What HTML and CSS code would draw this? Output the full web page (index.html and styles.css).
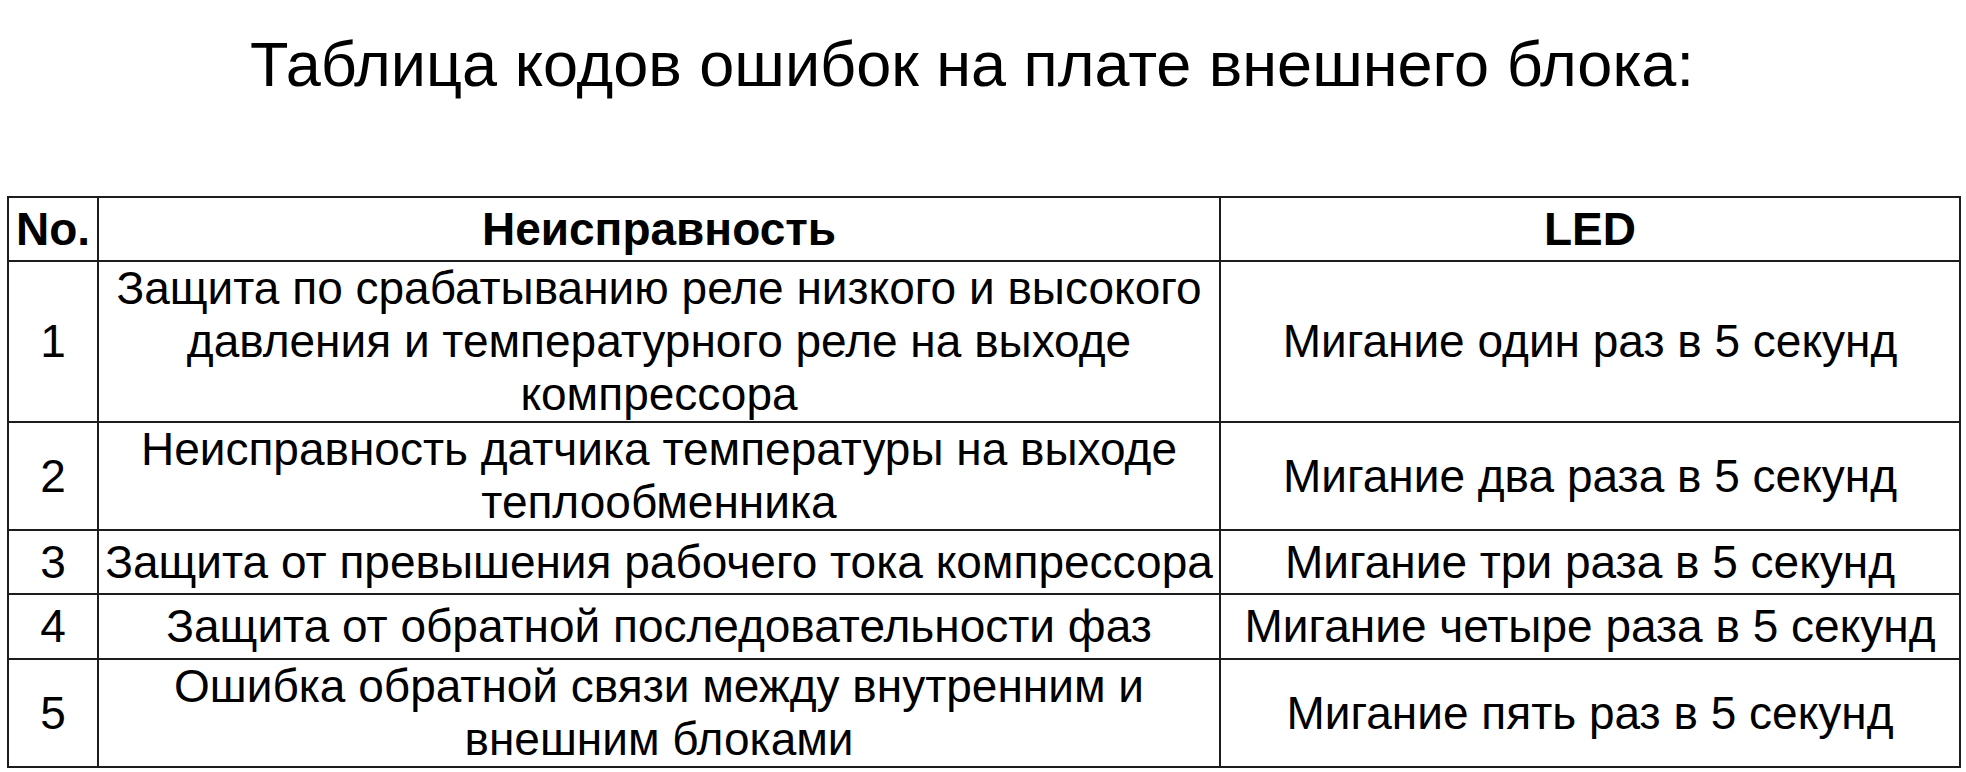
FILE: index.html
```html
<!DOCTYPE html>
<html lang="ru">
<head>
<meta charset="utf-8">
<title>Таблица кодов ошибок</title>
<link rel="stylesheet" href="styles.css">
</head>
<body>
<div class="page">
  <h1 class="title">Таблица кодов ошибок на плате внешнего блока:</h1>
  <table class="codes">
    <colgroup>
      <col class="c-no">
      <col class="c-fault">
      <col class="c-led">
    </colgroup>
    <thead>
      <tr class="r-head">
        <th>No.</th>
        <th>Неисправность</th>
        <th>LED</th>
      </tr>
    </thead>
    <tbody>
      <tr class="r-3">
        <td>1</td>
        <td>Защита по срабатыванию реле низкого и высокого<br>давления и температурного реле на выходе<br>компрессора</td>
        <td>Мигание один раз в 5 секунд</td>
      </tr>
      <tr class="r-2">
        <td>2</td>
        <td>Неисправность датчика температуры на выходе<br>теплообменника</td>
        <td>Мигание два раза в 5 секунд</td>
      </tr>
      <tr class="r-1">
        <td>3</td>
        <td>Защита от превышения рабочего тока компрессора</td>
        <td>Мигание три раза в 5 секунд</td>
      </tr>
      <tr class="r-1b">
        <td>4</td>
        <td>Защита от обратной последовательности фаз</td>
        <td>Мигание четыре раза в 5 секунд</td>
      </tr>
      <tr class="r-2b">
        <td>5</td>
        <td>Ошибка обратной связи между внутренним и<br>внешним блоками</td>
        <td>Мигание пять раз в 5 секунд</td>
      </tr>
    </tbody>
  </table>
</div>
</body>
</html>
```

FILE: styles.css
```css
html, body {
  margin: 0;
  padding: 0;
  background: #ffffff;
}

.page {
  width: 1966px;
  font-family: "Liberation Sans", Arial, sans-serif;
  color: #000;
}

.title {
  margin: 0;
  padding-top: 28px;
  height: 168px;
  font-size: 63px;
  font-weight: normal;
  line-height: 1.15;
  text-align: center;
  padding-right: 22px;
}

.codes {
  margin-left: 7px;
  width: 1952px;
  border-collapse: collapse;
  table-layout: fixed;
  font-size: 46px;
  line-height: 53px;
}

.c-no { width: 90px; }
.c-fault { width: 1122px; }
.c-led { width: 740px; }

.codes th,
.codes td {
  border: 2px solid #1c1c1c;
  padding: 0 2px;
  text-align: center;
  vertical-align: middle;
  white-space: nowrap;
}

.codes th {
  font-weight: bold;
}

.r-head { height: 64px; }
.r-3 { height: 160px; }
.r-2 { height: 108px; }
.r-1 { height: 64px; }
.r-1b { height: 65px; }
.r-2b { height: 107px; }
```
